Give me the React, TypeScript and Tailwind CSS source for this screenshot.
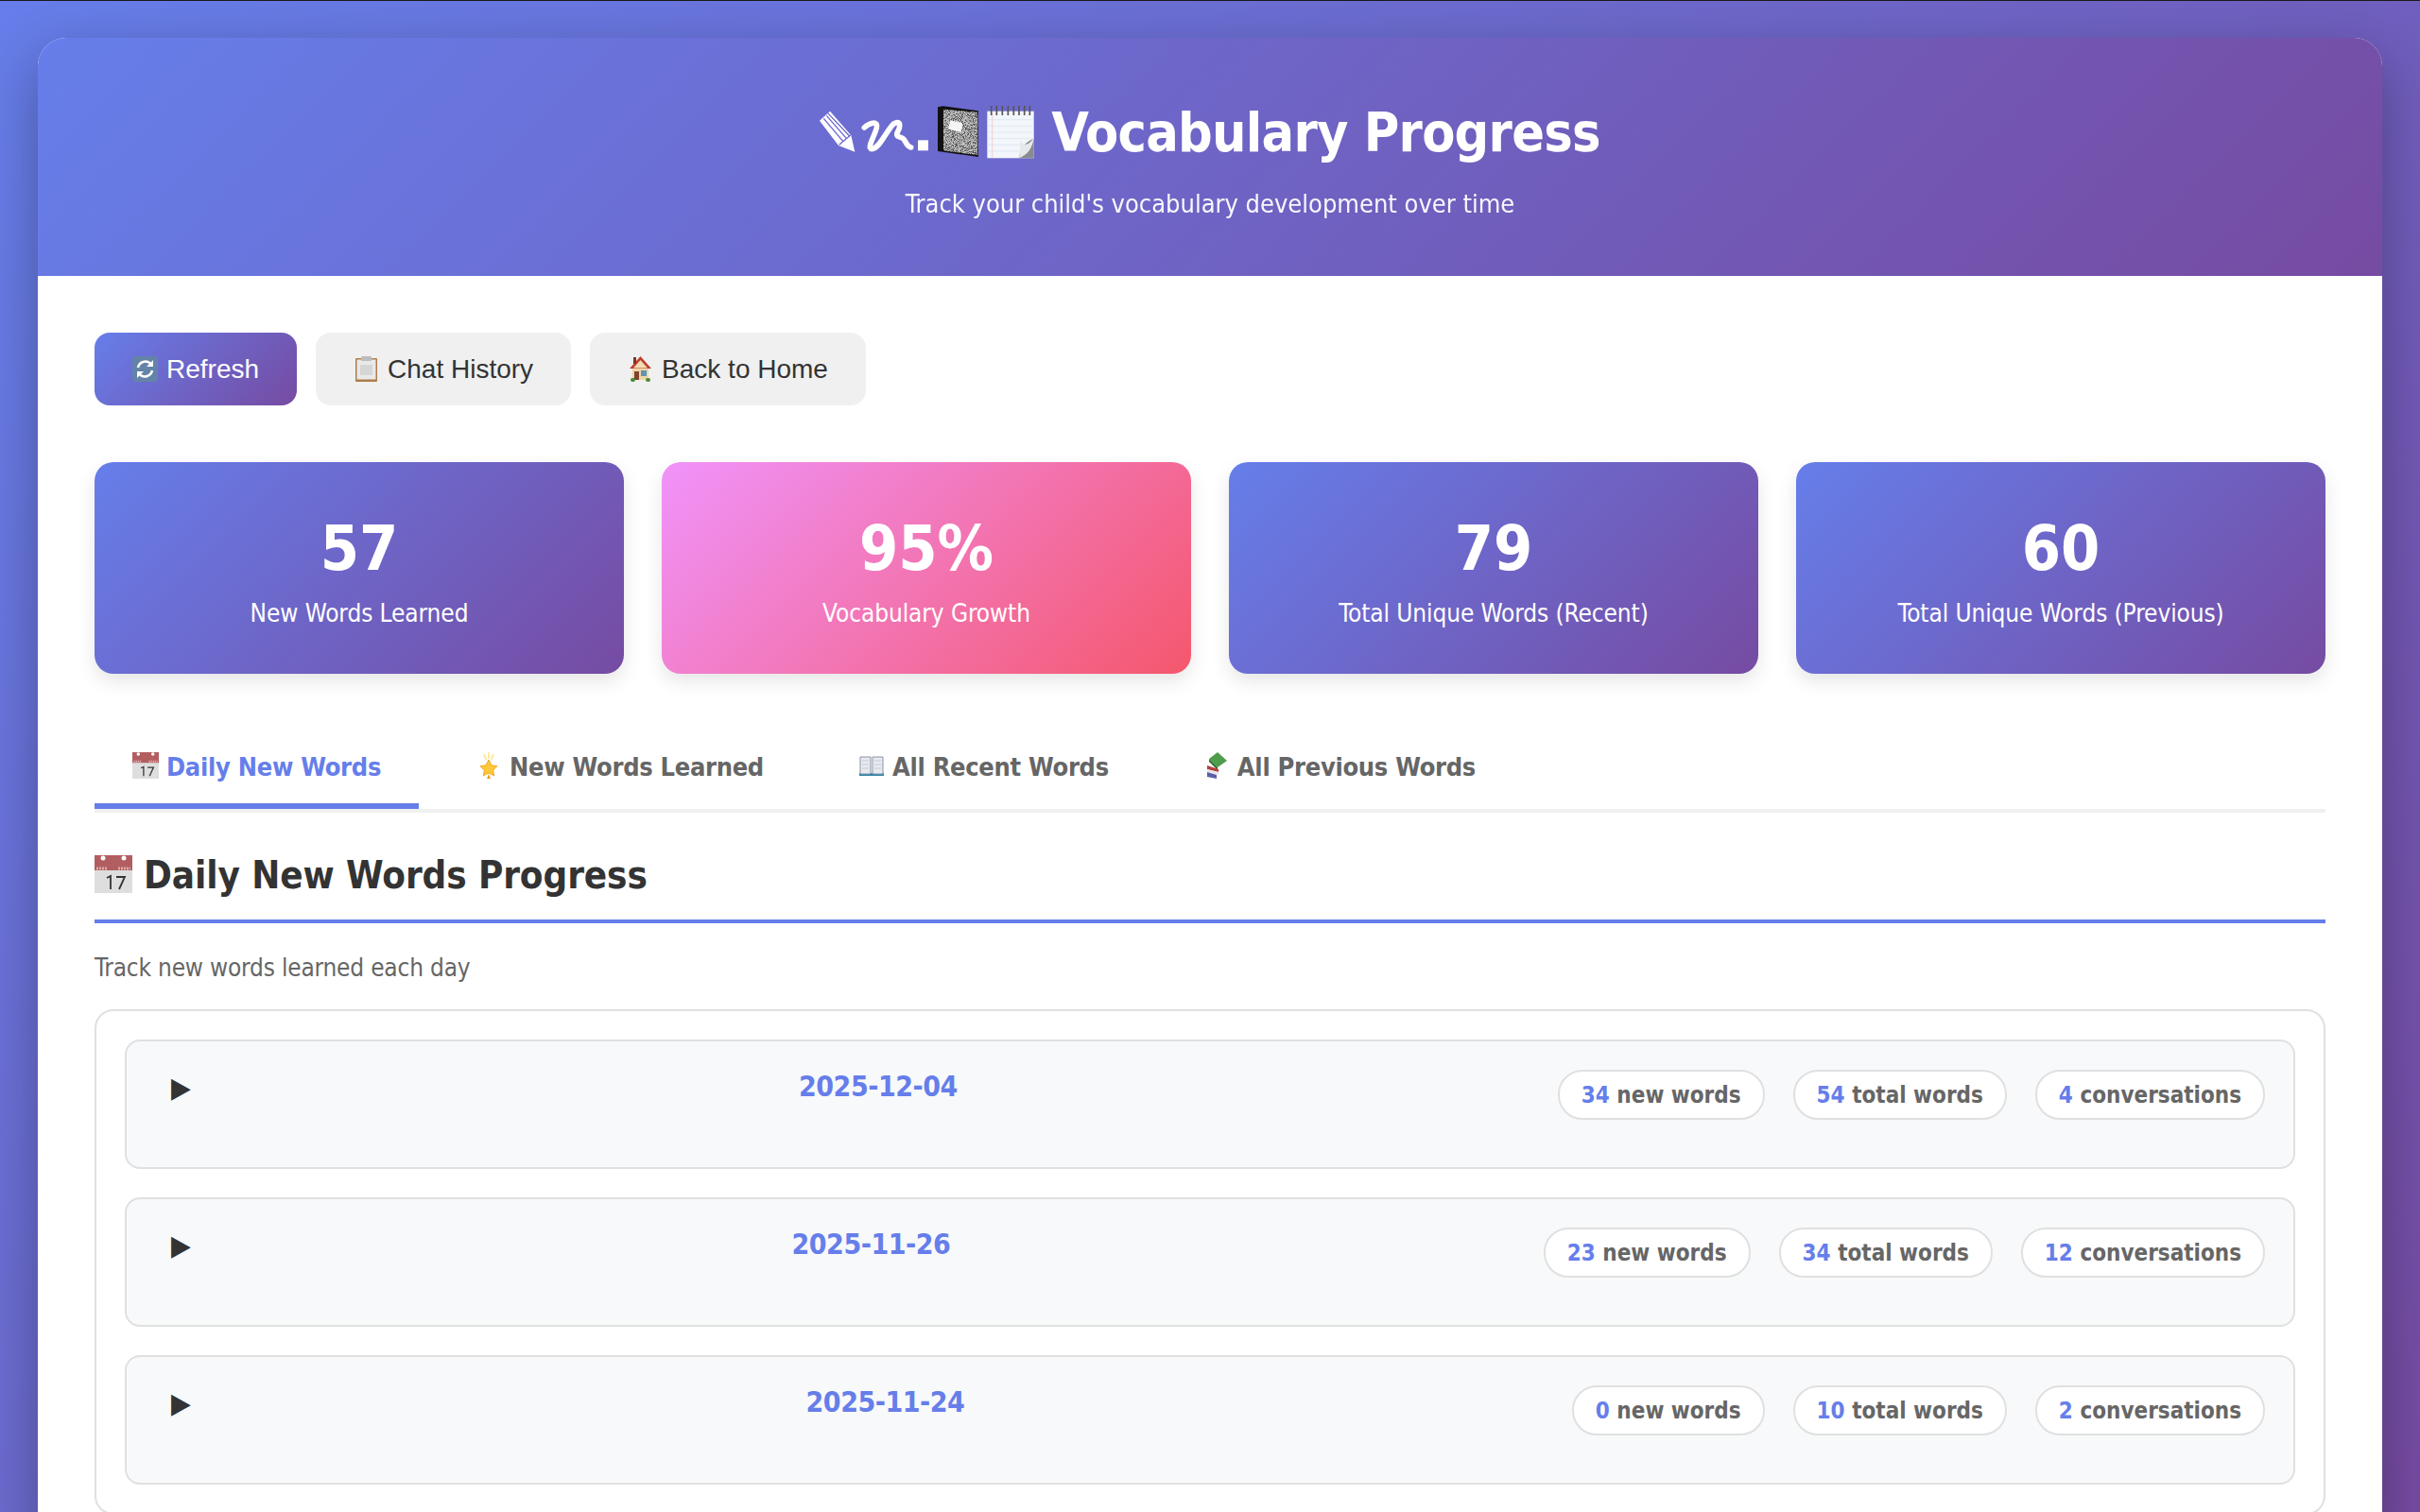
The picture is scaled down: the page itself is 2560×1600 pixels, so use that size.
import type { ReactNode } from "react";

const sans = "font-['DejaVu_Sans_Condensed','DejaVu_Sans',sans-serif] [font-stretch:condensed]";

function Calendar({ size }: { size: number }) {
  return (
    <svg width={size} height={size} viewBox="0 0 40 40" className="shrink-0">
      <rect x="0" y="0" width="40" height="40" fill="#dedede" />
      <rect x="0" y="0" width="40" height="16" fill="#b25e60" />
      <circle cx="9" cy="3" r="2.500" fill="#fff" />
      <circle cx="31" cy="3" r="2.500" fill="#fff" />
      <path d="M2 14h12M25 14h13" stroke="#dca9aa" strokeWidth="3" strokeDasharray="2 1" />
      <path d="M13 24l4-2v14M23 23h9l-6 13" stroke="#333" strokeWidth="1.800" fill="none" />
    </svg>
  );
}

function RefreshIcon() {
  return (
    <svg width="27" height="27" viewBox="0 0 27 27" className="shrink-0">
      <rect width="27" height="27" rx="4" fill="#6483a8" />
      <path d="M6 12a8 8 0 0 1 13-4.500M21 15a8 8 0 0 1-13 4.500" stroke="#fff" strokeWidth="2.500" fill="none" />
      <path d="M22 4v7h-7zM5 23v-7h7z" fill="#fff" />
    </svg>
  );
}

function Clipboard() {
  return (
    <svg width="27" height="27" viewBox="0 0 27 27" className="shrink-0">
      <rect x="2" y="2" width="23" height="25" rx="1" fill="#ad7d49" />
      <rect x="3.500" y="3.500" width="20" height="21" fill="#e9e9e9" />
      <rect x="8" y="0" width="11" height="5" rx="1" fill="#bcbcbc" />
      <rect x="7" y="9" width="13" height="11" fill="#d6d6d6" />
    </svg>
  );
}

function House() {
  return (
    <svg width="27" height="27" viewBox="0 0 27 27" className="shrink-0">
      <rect x="5" y="12" width="17" height="13" fill="#efd6a6" />
      <path d="M13.500 0 2 13h23z" fill="#bf3f2e" />
      <path d="M13.500 4 6 12.500h15z" fill="#f1dcb4" />
      <rect x="6" y="1" width="3" height="7" fill="#7c3528" />
      <rect x="7" y="16" width="5" height="9" fill="#81432c" />
      <rect x="14" y="15" width="6" height="6" fill="#5e95b8" />
      <rect x="3" y="23" width="5" height="4" rx="2" fill="#4f8a3c" />
      <rect x="19" y="23" width="5" height="4" rx="2" fill="#4f8a3c" />
    </svg>
  );
}

function Star() {
  return (
    <svg width="28" height="28" viewBox="0 0 28 28" className="shrink-0">
      <path d="M14 8l3 5.800 6 .9-4.300 4.200 1 6-5.700-2.900-5.700 2.900 1-6L5 14.700l6-.9z" fill="#fcc838" stroke="#f39c12" strokeWidth="0.800" />
      <path d="M14 0v7M9 2l2.500 6M19 2l-2.500 6" stroke="#fdeaa0" strokeWidth="2" />
      <path d="M14 23l-2 5h4z" fill="#f39c12" />
    </svg>
  );
}

function Book() {
  return (
    <svg width="28" height="28" viewBox="0 0 28 28" className="shrink-0">
      <rect x="1" y="22" width="26" height="3" fill="#2f86a6" />
      <path d="M2 5h11v18H2zM15 5h11v18H15z" fill="#e8eaef" stroke="#8794a6" />
      <path d="M4 9h7M4 13h7M4 17h7M17 9h7M17 13h7M17 17h7" stroke="#c3cad6" />
    </svg>
  );
}

function Books() {
  return (
    <svg width="28" height="28" viewBox="0 0 28 28" className="shrink-0">
      <path d="M6 7 15 0l10 9-10 7z" fill="#4f9d4a" />
      <path d="M6 7l9 9v3L6 10z" fill="#2f6f2c" />
      <path d="M4 14l12 4v3L4 18z" fill="#bb3b3b" />
      <path d="M4 18l12 3v3L4 21z" fill="#e5e7eb" />
      <path d="M4 21l10 3v4L4 26z" fill="#5b5fa8" />
    </svg>
  );
}

function TitleIcons() {
  return (
    <svg width="232" height="56" viewBox="210 96 696 168" className="shrink-0">
      <defs>
        <filter id="marble" x="0" y="0" width="100%" height="100%">
          <feTurbulence type="fractalNoise" baseFrequency="0.35" numOctaves="2" seed="4" />
          <feColorMatrix values="0 0 0 0 0.08  0 0 0 0 0.08  0 0 0 0 0.08  4 4 0 0 -3.600" />
          <feComposite in2="SourceGraphic" operator="atop" />
        </filter>
      </defs>
      {/* pencil */}
      <path d="M210 143 243 113 310 190 322 242 270 222z" fill="#fff" />
      <path d="M223 136 284 208M232 127 295 199M236 119 305 192" stroke="#6a66cd" strokeWidth="4" />
      <path d="M272 220 309 188" stroke="#6a66cd" strokeWidth="4" />
      {/* scribble */}
      <path
        d="M352 165C368 150 396 142 391 165 386 190 358 232 376 233 400 232 420 178 445 153 468 140 468 160 457 180 449 198 470 192 478 203 487 216 488 226 500 228"
        stroke="#fff"
        strokeWidth="17"
        strokeLinecap="round"
        strokeLinejoin="round"
        fill="none"
      />
      <rect x="522" y="205" width="33" height="33" fill="#fff" />
      {/* notebook */}
      <path d="M585 100 602 97 714 112V258L585 240z" fill="#111" />
      <path d="M603 107 712 116V252L603 238z" fill="#c4c4c4" filter="url(#marble)" />
      <path d="M624 146Q625 142 630 143L660 150Q665 152 664 157L660 176Q658 180 654 179L624 171Q618 169 619 165z" fill="#f4f4f4" />
      {/* notepad */}
      <rect x="742" y="113" width="148" height="149" fill="#f3f6fa" />
      <path d="M742 140H890M742 160H890M742 180H890M742 200H890M742 220H890M742 240H890" stroke="#d5e4f0" strokeWidth="2" />
      <path d="M758 113V262" stroke="#f0bcbc" strokeWidth="2" />
      <path d="M755 96V126M772 96V126M790 96V126M808 96V126M826 96V126M843 96V126M860 96V126M877 96V126" stroke="#555" strokeWidth="5" />
      <path d="M890 200C860 212 846 230 842 262H890z" fill="#8a8b90" />
      <path d="M890 196C878 218 862 226 846 210 848 230 846 248 842 262 868 254 886 232 890 196z" fill="#e6e8ea" />
    </svg>
  );
}

function StatCard({ value, label, pink }: { value: string; label: string; pink?: boolean }) {
  return (
    <div
      className={
        "rounded-[20px] h-[224px] pt-[54px] text-center text-white shadow-[0_8px_20px_rgba(0,0,0,0.1)] " +
        sans +
        (pink ? " bg-[linear-gradient(135deg,#f093fb_0%,#f5576c_100%)]" : " bg-[linear-gradient(135deg,#667eea_0%,#764ba2_100%)]")
      }
    >
      <div className="text-[66px] leading-[76px] font-bold">{value}</div>
      <div className="mt-[14px] text-[26px] leading-[32px] tracking-[-0.1px]">{label}</div>
    </div>
  );
}

function Tab({ icon, label, active }: { icon: ReactNode; label: string; active?: boolean }) {
  return (
    <div
      className={
        "px-[40px] pt-[24px] h-[87px] text-[27px] leading-[38px] tracking-[-0.3px] font-bold border-b-[6px] flex items-start gap-[8px] whitespace-nowrap " +
        sans +
        (active ? " text-[#667eea] border-[#667eea]" : " text-[#666] border-transparent")
      }
    >
      <span className="mt-[3px]">{icon}</span>
      <span>{label}</span>
    </div>
  );
}

function Pill({ n, label }: { n: number; label: string }) {
  return (
    <div className="h-[53px] px-[23px] pt-[1px] flex items-center rounded-[26px] bg-white border-[2px] border-[#e0e0e0] text-[24px] font-bold text-[#666] whitespace-nowrap">
      <span className="text-[#667eea]">{n}</span>&nbsp;{label}
    </div>
  );
}

function DayRow({ date, stats }: { date: string; stats: [number, number, number] }) {
  return (
    <div className={"h-[137px] rounded-[16px] bg-[#f8f9fa] border-[2px] border-[#e0e0e0] px-[30px] flex " + sans}>
      <div className="pt-[29px] pl-[17px] w-[46px] text-[30px] leading-[40px] text-[#333] font-['DejaVu_Sans',sans-serif] whitespace-nowrap">▶</div>
      <div className="flex-1 pt-[28px] text-center text-[30px] leading-[40px] tracking-[-0.5px] font-bold text-[#667eea]">{date}</div>
      <div className="flex gap-[30px] pt-[30px]">
        <Pill n={stats[0]} label="new words" />
        <Pill n={stats[1]} label="total words" />
        <Pill n={stats[2]} label="conversations" />
      </div>
    </div>
  );
}

export default function App() {
  return (
    <div className="h-[1600px] overflow-hidden bg-[linear-gradient(135deg,#667eea_0%,#764ba2_100%)] border-t-[1px] border-[#1a1a1a] px-[40px] pt-[39px]">
      <div className="rounded-[30px] overflow-hidden bg-white shadow-[0_20px_60px_rgba(0,0,0,0.3)] h-[1600px]">
        <div className={"h-[252px] pt-[72px] text-center text-white bg-[linear-gradient(135deg,#667eea_0%,#764ba2_100%)] " + sans}>
          <div className="flex items-center justify-center h-[56px] gap-[13px]">
            <TitleIcons />
            <span className="text-[57px] leading-[56px] tracking-[-0.75px] font-bold whitespace-nowrap">Vocabulary Progress</span>
          </div>
          <div className="mt-[31px] text-[27px] leading-[34px] opacity-95">Track your child's vocabulary development over time</div>
        </div>

        <div className="p-[60px]">
          <div className="flex gap-[20px] font-['Liberation_Sans',sans-serif] text-[28px]">
            <div className="h-[77px] px-[40px] rounded-[16px] flex items-center gap-[9px] text-white bg-[linear-gradient(135deg,#667eea_0%,#764ba2_100%)]">
              <RefreshIcon /> Refresh
            </div>
            <div className="h-[77px] px-[40px] rounded-[16px] flex items-center gap-[9px] text-[#333] bg-[#f0f0f0]">
              <Clipboard /> Chat History
            </div>
            <div className="h-[77px] px-[40px] rounded-[16px] flex items-center gap-[9px] text-[#333] bg-[#f0f0f0]">
              <House /> Back to Home
            </div>
          </div>

          <div className="mt-[60px] grid grid-cols-4 gap-[40px]">
            <StatCard value="57" label="New Words Learned" />
            <StatCard value="95%" label="Vocabulary Growth" pink />
            <StatCard value="79" label="Total Unique Words (Recent)" />
            <StatCard value="60" label="Total Unique Words (Previous)" />
          </div>

          <div className="mt-[56px] flex gap-[20px] border-b-[4px] border-[#f0f0f0]">
            <Tab icon={<Calendar size={28} />} label="Daily New Words" active />
            <Tab icon={<Star />} label="New Words Learned" />
            <Tab icon={<Book />} label="All Recent Words" />
            <Tab icon={<Books />} label="All Previous Words" />
          </div>

          <div className={"mt-[40px] h-[77px] border-b-[4px] border-[#667eea] flex items-start gap-[12px] text-[40px] leading-[52px] tracking-[-0.1px] font-bold text-[#333] " + sans}>
            <span className="mt-[5px]"><Calendar size={40} /></span>
            <span>Daily New Words Progress</span>
          </div>
          <div className={"mt-[30px] text-[26px] leading-[34px] tracking-[-0.2px] text-[#666] " + sans}>Track new words learned each day</div>

          <div className="mt-[27px] rounded-[20px] border-[2px] border-[#e0e0e0] p-[30px] flex flex-col gap-[30px]">
            <DayRow date="2025-12-04" stats={[34, 54, 4]} />
            <DayRow date="2025-11-26" stats={[23, 34, 12]} />
            <DayRow date="2025-11-24" stats={[0, 10, 2]} />
          </div>
        </div>
      </div>
    </div>
  );
}
